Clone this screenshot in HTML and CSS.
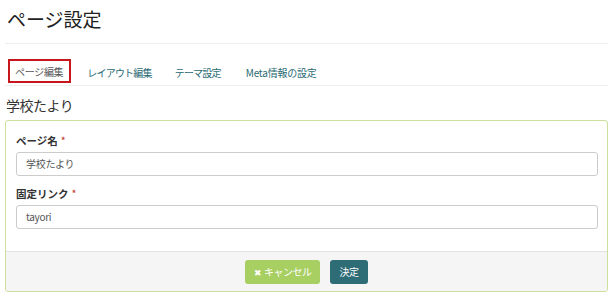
FILE: index.html
```html
<!DOCTYPE html>
<html lang="ja">
<head>
<meta charset="utf-8">
<title>ページ設定</title>
<link rel="stylesheet" href="styles.css">
</head>
<body>
<div class="page">
  <header class="page-header">
    <h1>ページ設定</h1>
  </header>
  <ul class="tabs">
    <li class="tab active"><span>ページ編集</span></li>
    <li class="tab"><span>レイアウト編集</span></li>
    <li class="tab"><span>テーマ設定</span></li>
    <li class="tab tab-meta"><span>Meta情報の設定</span></li>
  </ul>
  <h2 class="subtitle">学校たより</h2>
  <div class="panel">
    <div class="panel-body">
      <div class="field">
        <label class="label">ページ名<span class="req">*</span></label>
        <div class="input">学校たより</div>
      </div>
      <div class="field">
        <label class="label">固定リンク<span class="req">*</span></label>
        <div class="input">tayori</div>
      </div>
    </div>
    <div class="panel-footer">
      <button class="btn btn-cancel"><span class="x">✖</span>キャンセル</button>
      <button class="btn btn-ok">決定</button>
    </div>
  </div>
</div>
</body>
</html>
```
FILE: styles.css
```css
* { box-sizing: border-box; }
html, body { margin: 0; padding: 0; background: #fff; }
body {
  font-family: "Noto Sans CJK JP", "Noto Sans", sans-serif;
  color: #333;
}
.page { padding: 0 2px 0 5px; width: 610px; }
.page-header {
  padding-top: 6px;
  border-bottom: 1px solid #eee;
  height: 44px;
}
.page-header h1 {
  margin: 0 0 0 2px;
  font-size: 19px;
  font-weight: 400;
  line-height: 26px;
  color: #222;
}
.tabs {
  list-style: none;
  margin: 15px 0 0;
  padding: 0 0 0 3px;
  display: flex;
  border-bottom: 1px solid #eee;
  height: 27px;
}
.tab {
  height: 26px;
  padding: 0 12px 0 5px;
  margin-right: 6px;
  display: flex;
  align-items: center;
  font-size: 10px;
  color: #2a6a74;
  letter-spacing: -0.8px;
  white-space: nowrap;
}
.tab-meta { letter-spacing: -0.2px; padding-left: 7px; }
.tab.active {
  border: 2px solid #c8161d;
  color: #555;
  height: 24px;
  padding: 0 6px 0 5px;
  margin-right: 11px;
  letter-spacing: -0.3px;
}
.subtitle {
  margin: 9px 0 0 1px;
  font-size: 14px;
  font-weight: 400;
  line-height: 20px;
  color: #333;
  letter-spacing: -0.5px;
}
.panel {
  margin-top: 5px;
  border: 1px solid #cddf9c;
  border-radius: 3px;
  width: 603px;
}
.panel-body { padding: 8px 10px 13px; }
.field { margin-bottom: 9px; }
.label {
  display: block;
  font-size: 10.5px;
  font-weight: 700;
  color: #333;
  line-height: 18px;
  margin: 3px 0 2px;
}
.req { color: #c0392b; font-weight: 400; margin-left: 3px; }
.input {
  height: 24px;
  border: 1px solid #ccc;
  border-radius: 3px;
  width: 582px;
  padding: 0 9px;
  font-size: 10px;
  line-height: 22px;
  color: #555;
  letter-spacing: -0.3px;
}
.panel-footer {
  background: #f5f5f5;
  border-top: 1px solid #e2e2e2;
  height: 40px;
  display: flex;
  justify-content: center;
  align-items: center;
  gap: 10px;
  border-radius: 0 0 3px 3px;
}
.btn {
  border: none;
  border-radius: 3px;
  height: 24px;
  font-family: inherit;
  font-size: 10px;
  color: #fff;
  padding: 0 6px;
  letter-spacing: -0.5px;
  white-space: nowrap;
}
.btn-cancel { background: #a8cf61; width: 75px; }
.btn-cancel .x { font-size: 9px; margin-right: 3px; }
.btn-ok { background: #2e6d76; width: 38px; }
```
